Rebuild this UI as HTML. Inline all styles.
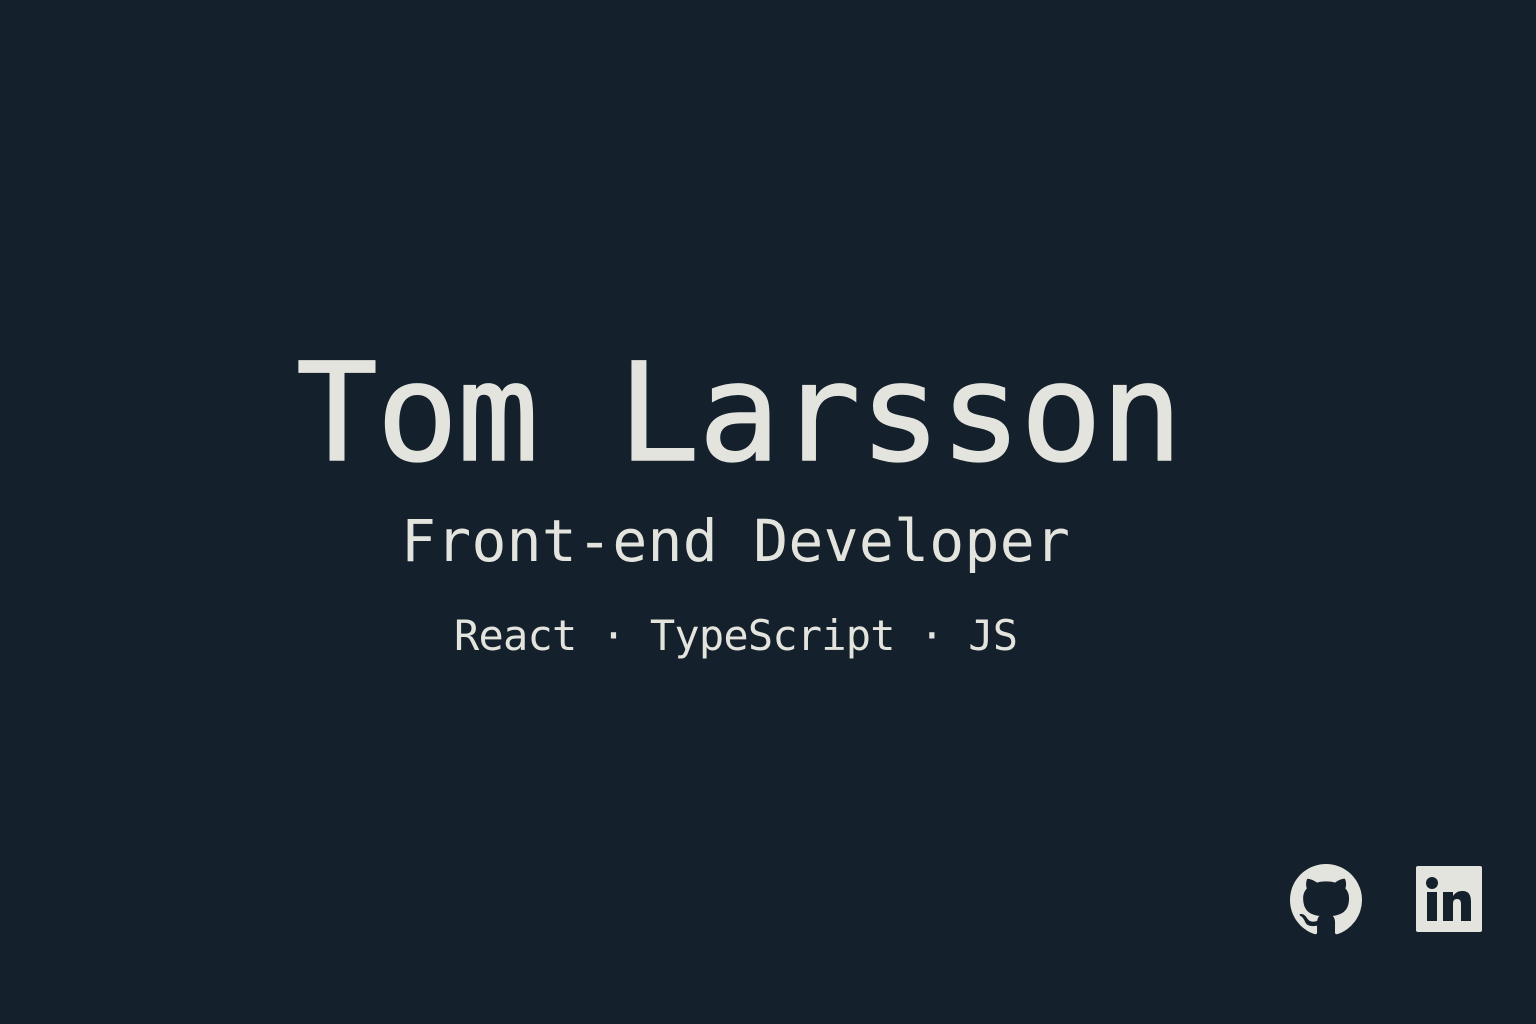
<!DOCTYPE html>
<html><head><meta charset="utf-8"><style>
html,body{margin:0;padding:0}
body{width:1536px;height:1024px;background:#14202b;position:relative;overflow:hidden;font-family:"DejaVu Sans Mono","Liberation Mono",monospace;color:#e4e4de}
.t{position:absolute;white-space:nowrap;line-height:1}
#n{left:296px;top:346px;font-size:136px;letter-spacing:-1.4px;-webkit-text-stroke:1.5px #e4e4de}
#s{left:401px;top:512px;font-size:58px;letter-spacing:0.3px}
#k{left:454px;top:615px;font-size:42px;letter-spacing:-0.8px}
</style></head><body>
<div class="t" id="n">Tom Larsson</div>
<div class="t" id="s">Front-end Developer</div>
<div class="t" id="k">React · TypeScript · JS</div>
<svg style="position:absolute;left:1290px;top:864px" width="72" height="72" viewBox="0 0 16 16"><path fill="#e4e4de" d="M8 0C3.58 0 0 3.580 0 8c0 3.54 2.29 6.53 5.47 7.59.4.07.55-.17.55-.38 0-.19-.01-.82-.01-1.49-2.01.37-2.53-.49-2.69-.94-.09-.23-.48-.94-.82-1.13-.28-.15-.68-.52-.01-.53.63-.01 1.08.58 1.23.82.72 1.21 1.87.87 2.33.66.07-.52.28-.87.51-1.07-1.78-.2-3.64-.89-3.64-3.95 0-.87.31-1.59.82-2.15-.08-.2-.36-1.02.08-2.12 0 0 .67-.21 2.2.82.64-.18 1.32-.27 2-.27.68 0 1.36.09 2 .27 1.53-1.04 2.2-.82 2.2-.82.44 1.1.16 1.92.08 2.12.51.56.82 1.27.82 2.15 0 3.07-1.87 3.75-3.65 3.95.29.25.54.73.54 1.48 0 1.07-.01 1.93-.01 2.2 0 .21.15.46.55.38A8.013 8.013 0 0016 8c0-4.42-3.58-8-8-8z"/></svg>
<svg style="position:absolute;left:1416px;top:866px" width="66" height="66" viewBox="0 0 66 66"><rect width="66" height="66" rx="2" fill="#e4e4de"/><rect x="11" y="26" width="10" height="29" fill="#14202b"/><circle cx="16" cy="17" r="6" fill="#14202b"/><path fill="#14202b" d="M27 26h10v4c2-3 5-5 9-5 7 0 9 4 9 11v19H45V38c0-3-1-5-4-5s-4 2-4 5v17H27z"/></svg>
</body></html>
